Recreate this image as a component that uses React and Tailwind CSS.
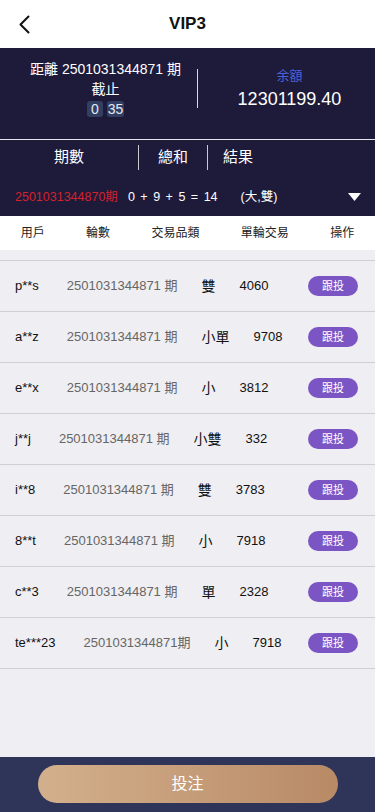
import React from 'react';

const rows = [
  { user: 'p**s', period: '2501031344871 期', type: '雙', amount: '4060' },
  { user: 'a**z', period: '2501031344871 期', type: '小單', amount: '9708' },
  { user: 'e**x', period: '2501031344871 期', type: '小', amount: '3812' },
  { user: 'j**j', period: '2501031344871 期', type: '小雙', amount: '332' },
  { user: 'i**8', period: '2501031344871 期', type: '雙', amount: '3783' },
  { user: '8**t', period: '2501031344871 期', type: '小', amount: '7918' },
  { user: 'c**3', period: '2501031344871 期', type: '單', amount: '2328' },
  { user: 'te***23', period: '2501031344871期', type: '小', amount: '7918' },
];

const font = { fontFamily: '"Liberation Sans", "Noto Sans CJK TC", Arial, sans-serif' };

const App = () => {
  return (
    <div className="w-[375px] h-[812px] flex flex-col bg-[#efeef2] overflow-hidden" style={font}>
      {/* 頂部標題 */}
      <div className="h-[48px] bg-white flex items-center relative shrink-0">
        <button className="absolute left-[14px] top-[12px] w-[20px] h-[24px] flex items-center justify-center">
          <svg width="12" height="19" viewBox="0 0 12 19" fill="none">
            <path d="M10.5 1.5 L2.5 9.5 L10.5 17.5" stroke="#111" strokeWidth="2" strokeLinecap="round" strokeLinejoin="round" />
          </svg>
        </button>
        <h1 className="flex-1 text-center text-[17px] font-bold text-[#111]">VIP3</h1>
      </div>

      {/* 期數倒數 & 余額 */}
      <div className="h-[91px] bg-[#1e1b3a] flex shrink-0">
        <div className="w-[197px] pl-[14px] pt-[11px] flex flex-col items-center text-white">
          <div className="text-[14px] leading-[20px] whitespace-nowrap">距離 2501031344871 期</div>
          <div className="text-[14px] leading-[20px]">截止</div>
          <div className="mt-[2px] flex gap-[4px]">
            <span className="w-[16px] h-[16px] rounded-[3px] bg-[#323f63] text-[#e6e9f2] text-[14px] leading-[16px] text-center">0</span>
            <span className="w-[17px] h-[16px] rounded-[3px] bg-[#323f63] text-[#e6e9f2] text-[14px] leading-[16px] text-center">35</span>
          </div>
        </div>
        <div className="w-px h-[39px] mt-[21px] bg-[#d8d8e0]"></div>
        <div className="flex-1 pl-[6px] pt-[19px] flex flex-col items-center">
          <div className="text-[13px] leading-[18px] text-[#4a62dc]">余額</div>
          <div className="mt-[2px] text-[18px] leading-[24px] text-white">12301199.40</div>
        </div>
      </div>
      <div className="h-px bg-[#e6e6ee] shrink-0"></div>

      {/* 開獎結果 */}
      <div className="bg-[#1e1b3a] shrink-0 pb-[4px]">
        <div className="h-[34px] flex items-center text-white text-[15px]">
          <div className="w-[138px] text-center">期數</div>
          <div className="w-px h-[25px] bg-[#c8c8d2]"></div>
          <div className="px-[19px]">總和</div>
          <div className="w-px h-[25px] bg-[#c8c8d2]"></div>
          <div className="pl-[15px]">結果</div>
        </div>
        <div className="mt-[8px] h-[30px] flex items-center pl-[15px] pr-[14px] text-[12.5px]">
          <span className="text-[#d3222c]">2501031344870期</span>
          <span className="ml-[10px] flex gap-[5.5px] text-white">
            <span>0</span><span>+</span><span>9</span><span>+</span><span>5</span><span>=</span><span>14</span>
          </span>
          <span className="ml-[23px] text-white">(大,雙)</span>
          <svg className="ml-auto" width="13" height="8" viewBox="0 0 13 8">
            <path d="M0 0 H13 L6.5 8 Z" fill="#fff" />
          </svg>
        </div>
      </div>

      {/* 表頭 */}
      <div className="h-[34px] bg-white flex items-center justify-around text-[12px] text-[#222] shrink-0">
        <span>用戶</span>
        <span>輪數</span>
        <span>交易品類</span>
        <span>單輪交易</span>
        <span>操作</span>
      </div>

      {/* 跟投列表 */}
      <div className="flex-1 pt-[10px]">
        <div className="border-t border-[#d0d0d4]">
          {rows.map((r, i) => (
            <div key={i} className="h-[51px] border-b border-[#d0d0d4] flex items-center pl-[15px] pr-[17px]">
              <span className="text-[13px] text-[#111]">{r.user}</span>
              <span className="ml-[28px] text-[13px] text-[#666]">{r.period}</span>
              <span className="ml-[24px] text-[14px] text-[#111]">{r.type}</span>
              <span className="ml-[24px] text-[13px] text-[#111]">{r.amount}</span>
              <button className="ml-auto w-[50px] h-[20px] rounded-full bg-[#7c55c4] text-white text-[11px] leading-[20px]">跟投</button>
            </div>
          ))}
        </div>
      </div>

      {/* 投注按鈕 */}
      <div className="h-[55px] bg-[#2f3459] flex justify-center pt-[8px] shrink-0">
        <button className="w-[300px] h-[38px] rounded-full bg-gradient-to-r from-[#d3b08d] to-[#b88a66] text-white text-[16px]">
          投注
        </button>
      </div>
    </div>
  );
};

export default App;
